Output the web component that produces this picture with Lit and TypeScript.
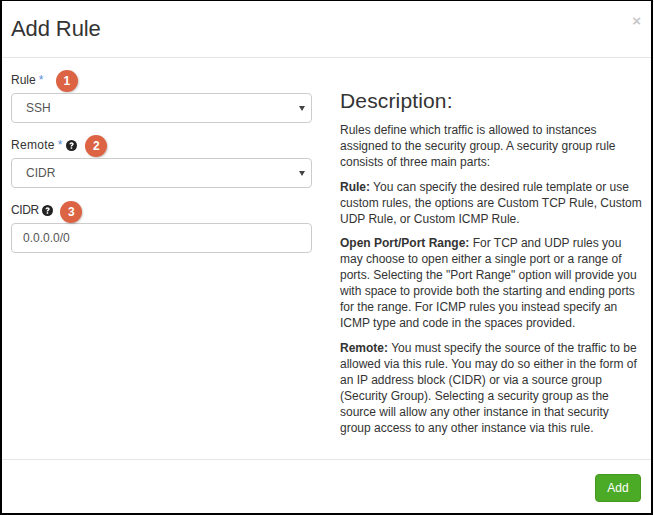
import { LitElement, html, css } from "lit";
import { customElement } from "lit/decorators.js";

@customElement("app-root")
export class AppRoot extends LitElement {
  static styles = css`
    :host {
      display: block;
      width: 653px;
      height: 515px;
      box-sizing: border-box;
      background: #fff;
      border-style: solid;
      border-color: #000;
      border-width: 1px 2px 2px 2px;
      font-family: "Liberation Sans", Arial, sans-serif;
      font-size: 12px;
      color: #333;
    }

    .modal {
      display: flex;
      flex-direction: column;
      height: 100%;
    }

    header {
      display: flex;
      justify-content: space-between;
      height: 56px;
      padding: 0 10px 0 9px;
      border-bottom: 1px solid #e5e5e5;
      flex: none;
    }

    h4 {
      margin: 14px 0 0;
      font-size: 22px;
      line-height: 27px;
      font-weight: 400;
      letter-spacing: -0.1px;
    }

    .close {
      margin-top: 11px;
      font-size: 15px;
      line-height: 17px;
      font-weight: 700;
      color: #c8c8c8;
    }

    .body {
      flex: 1;
      display: flex;
      padding: 0 9px;
      gap: 28px;
    }

    form {
      width: 301px;
      flex: none;
      padding-top: 10px;
    }

    .field {
      margin-bottom: 10px;
    }

    .label {
      display: flex;
      align-items: center;
      height: 24px;
      margin-bottom: 1px;
      color: #333;
      font-size: 12px;
    }

    .label.remote {
      letter-spacing: 0.3px;
    }

    .label.cidr {
      letter-spacing: -0.4px;
    }

    .req {
      color: #5b8fd6;
      margin-left: 3px;
    }

    .help {
      margin-left: 3.5px;
    }

    .num {
      width: 22px;
      height: 22px;
      border-radius: 50%;
      background: #dc6343;
      box-shadow: 1px 1px 2px rgba(0, 0, 0, 0.2);
      color: #fff;
      font-size: 12px;
      font-weight: 700;
      line-height: 22px;
      text-align: center;
      letter-spacing: 0;
    }

    .num.one {
      margin-left: 12.5px;
      margin-top: 1px;
    }

    .num.two {
      margin-left: 8px;
      margin-top: 2px;
    }

    .num.three {
      margin-left: 7px;
      margin-top: 3px;
    }

    .select {
      position: relative;
    }

    .select::after {
      content: "";
      position: absolute;
      right: 7px;
      top: 13px;
      border-style: solid;
      border-width: 5px 3px 0;
      border-color: #444 transparent transparent;
    }

    select,
    input {
      display: block;
      width: 100%;
      height: 30px;
      box-sizing: border-box;
      margin: 0;
      border: 1px solid #ccc;
      border-radius: 4px;
      background: #fff;
      font: inherit;
      color: #555;
      outline: none;
    }

    select {
      appearance: none;
      padding: 0 14px;
    }

    input {
      padding: 0 11px;
    }

    .desc {
      flex: 1;
      line-height: 16px;
      padding-top: 9px;
    }

    h3 {
      margin: 22px 0 9px;
      font-size: 21px;
      line-height: 24px;
      font-weight: 400;
      letter-spacing: 0.15px;
    }

    p {
      margin: 0 0 8.67px;
    }

    footer {
      flex: none;
      height: 54px;
      box-sizing: border-box;
      display: flex;
      justify-content: flex-end;
      padding: 14px 10px 0;
      border-top: 1px solid #e5e5e5;
    }

    button {
      width: 46px;
      height: 28px;
      padding: 0;
      border: 1px solid #459a1e;
      border-radius: 4px;
      background: #4cab26;
      color: #fff;
      font: inherit;
    }
  `;

  private helpIcon() {
    return html`<svg class="help" width="11" height="11" viewBox="0 0 24 24">
      <circle cx="12" cy="12" r="12" fill="#222"></circle>
      <path
        d="M7.5 9.5c0-2.8 2-4.5 4.7-4.5 2.6 0 4.5 1.6 4.5 3.9 0 1.7-1 2.6-2.2 3.4-.8.5-1.1.9-1.1 1.8h-3.1c0-1.9.6-2.8 1.9-3.6.8-.5 1.2-.9 1.2-1.4 0-.6-.5-1.1-1.2-1.1-.8 0-1.3.6-1.4 1.5H7.5zM10.2 15.7h3.3V19h-3.3z"
        fill="#fff"
      ></path>
    </svg>`;
  }

  render() {
    return html`
      <div class="modal">
        <header>
          <h4>Add Rule</h4>
          <span class="close">×</span>
        </header>
        <div class="body">
          <form>
            <div class="field">
              <div class="label">
                Rule<span class="req">*</span>
                <span class="num one">1</span>
              </div>
              <div class="select">
                <select><option>SSH</option></select>
              </div>
            </div>
            <div class="field">
              <div class="label remote">
                Remote<span class="req">*</span>${this.helpIcon()}
                <span class="num two">2</span>
              </div>
              <div class="select">
                <select><option>CIDR</option></select>
              </div>
            </div>
            <div class="field">
              <div class="label cidr">
                CIDR${this.helpIcon()}
                <span class="num three">3</span>
              </div>
              <input value="0.0.0.0/0" />
            </div>
          </form>
          <div class="desc">
            <h3>Description:</h3>
            <p>
              Rules define which traffic is allowed to instances<br />
              assigned to the security group. A security group rule<br />
              consists of three main parts:
            </p>
            <p>
              <b>Rule:</b> You can specify the desired rule template or use<br />
              custom rules, the options are Custom TCP Rule, Custom<br />
              UDP Rule, or Custom ICMP Rule.
            </p>
            <p>
              <b>Open Port/Port Range:</b> For TCP and UDP rules you<br />
              may choose to open either a single port or a range of<br />
              ports. Selecting the "Port Range" option will provide you<br />
              with space to provide both the starting and ending ports<br />
              for the range. For ICMP rules you instead specify an<br />
              ICMP type and code in the spaces provided.
            </p>
            <p>
              <b>Remote:</b> You must specify the source of the traffic to be<br />
              allowed via this rule. You may do so either in the form of<br />
              an IP address block (CIDR) or via a source group<br />
              (Security Group). Selecting a security group as the<br />
              source will allow any other instance in that security<br />
              group access to any other instance via this rule.
            </p>
          </div>
        </div>
        <footer><button>Add</button></footer>
      </div>
    `;
  }
}
